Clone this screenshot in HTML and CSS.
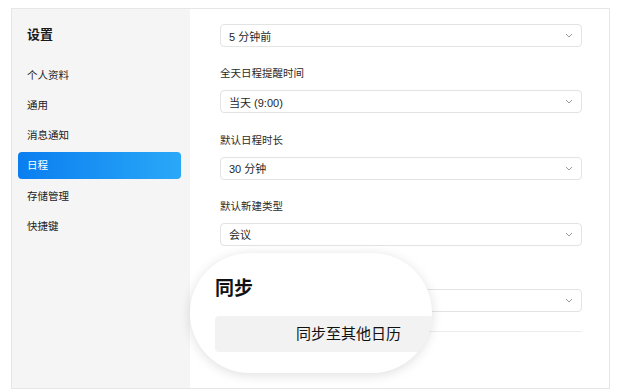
FILE: index.html
```html
<!DOCTYPE html>
<html lang="zh">
<head>
    <meta charset="UTF-8">
    <meta name="viewport" content="width=device-width, initial-scale=1.0">
    <title>设置</title>
    <link rel="stylesheet" href="styles.css">
</head>
<body>
    <div class="window">
        <div class="sidebar">
            <h1>设置</h1>
            <div class="menu">
                <div class="menu-item">个人资料</div>
                <div class="menu-item">通用</div>
                <div class="menu-item">消息通知</div>
                <div class="menu-item active">日程</div>
                <div class="menu-item">存储管理</div>
                <div class="menu-item">快捷键</div>
            </div>
        </div>

        <div class="content">
            <div class="select">
                <span>5 分钟前</span>
                <svg class="chevron" width="8" height="5" viewBox="0 0 8 5"><path d="M1 1 L4 4 L7 1" /></svg>
            </div>

            <div class="field">
                <div class="label">全天日程提醒时间</div>
                <div class="select">
                    <span>当天 (9:00)</span>
                    <svg class="chevron" width="8" height="5" viewBox="0 0 8 5"><path d="M1 1 L4 4 L7 1" /></svg>
                </div>
            </div>

            <div class="field">
                <div class="label">默认日程时长</div>
                <div class="select">
                    <span>30 分钟</span>
                    <svg class="chevron" width="8" height="5" viewBox="0 0 8 5"><path d="M1 1 L4 4 L7 1" /></svg>
                </div>
            </div>

            <div class="field">
                <div class="label">默认新建类型</div>
                <div class="select">
                    <span>会议</span>
                    <svg class="chevron" width="8" height="5" viewBox="0 0 8 5"><path d="M1 1 L4 4 L7 1" /></svg>
                </div>
            </div>

            <!-- this row sits under the callout, so its texts are not drawn -->
            <div class="field">
                <div class="label"></div>
                <div class="select">
                    <span></span>
                    <svg class="chevron" width="8" height="5" viewBox="0 0 8 5"><path d="M1 1 L4 4 L7 1" /></svg>
                </div>
            </div>

            <div class="divider"></div>
        </div>

        <!-- zoomed callout over the sync section -->
        <div class="magnifier">
            <div class="mag-title">同步</div>
            <div class="mag-row">同步至其他日历</div>
        </div>
    </div>
</body>
</html>
```

FILE: styles.css
```css
body {
    margin: 0;
    background-color: #ffffff;
    font-family: "Liberation Sans", "Noto Sans CJK SC", sans-serif;
    color: #1f1f1f;
}
.window {
    position: relative;
    display: flex;
    width: 597px;
    height: 379px;
    margin: 8px 0 0 11px;
    border: 1px solid #e6e6e6;
    overflow: hidden;
}
.sidebar {
    width: 178px;
    background-color: #f5f5f5;
    padding-top: 17px;
}
.sidebar h1 {
    margin: 0 0 0 15px;
    font-size: 13px;
    line-height: 18px;
    font-weight: bold;
    color: #1a1a1a;
}
.menu {
    margin-top: 17.5px;
}
.menu-item {
    height: 27px;
    line-height: 27px;
    margin: 0 9px 3.3px 6px;
    padding-left: 9px;
    font-size: 10.5px;
    color: #222;
    border-radius: 4px;
}
.menu-item.active {
    background: linear-gradient(90deg, #0a7ef0, #2aa8f8);
    color: #ffffff;
}
.content {
    flex: 1;
    padding: 15px 27px 0 30px;
}
.field {
    margin-top: 18.3px;
}
.label {
    height: 16px;
    font-size: 10.5px;
    line-height: 16px;
    color: #2a2a2a;
    margin-bottom: 9px;
}
.select {
    display: flex;
    align-items: center;
    justify-content: space-between;
    height: 21px;
    padding: 0 8px 0 8px;
    border: 1px solid #e3e3e3;
    border-radius: 4px;
    font-size: 11px;
    color: #1f1f1f;
}
.chevron path {
    fill: none;
    stroke: #9a9a9a;
    stroke-width: 1;
}
.divider {
    margin-top: 19px;
    height: 1px;
    background-color: #ececec;
}
.magnifier {
    position: absolute;
    left: 178px;
    top: 244px;
    width: 242px;
    height: 120px;
    border-radius: 60px;
    background-color: #ffffff;
    box-shadow: 0 2px 12px rgba(0,0,0,0.13);
    overflow: hidden;
}
.mag-title {
    margin: 24px 0 0 25px;
    font-size: 19px;
    line-height: 24px;
    font-weight: bold;
    color: #111;
}
.mag-row {
    margin: 15px 0 0 25px;
    height: 36px;
    line-height: 36px;
    padding-left: 81px;
    background-color: #f2f2f2;
    border-radius: 4px 0 0 4px;
    font-size: 15px;
    color: #111;
}
```
